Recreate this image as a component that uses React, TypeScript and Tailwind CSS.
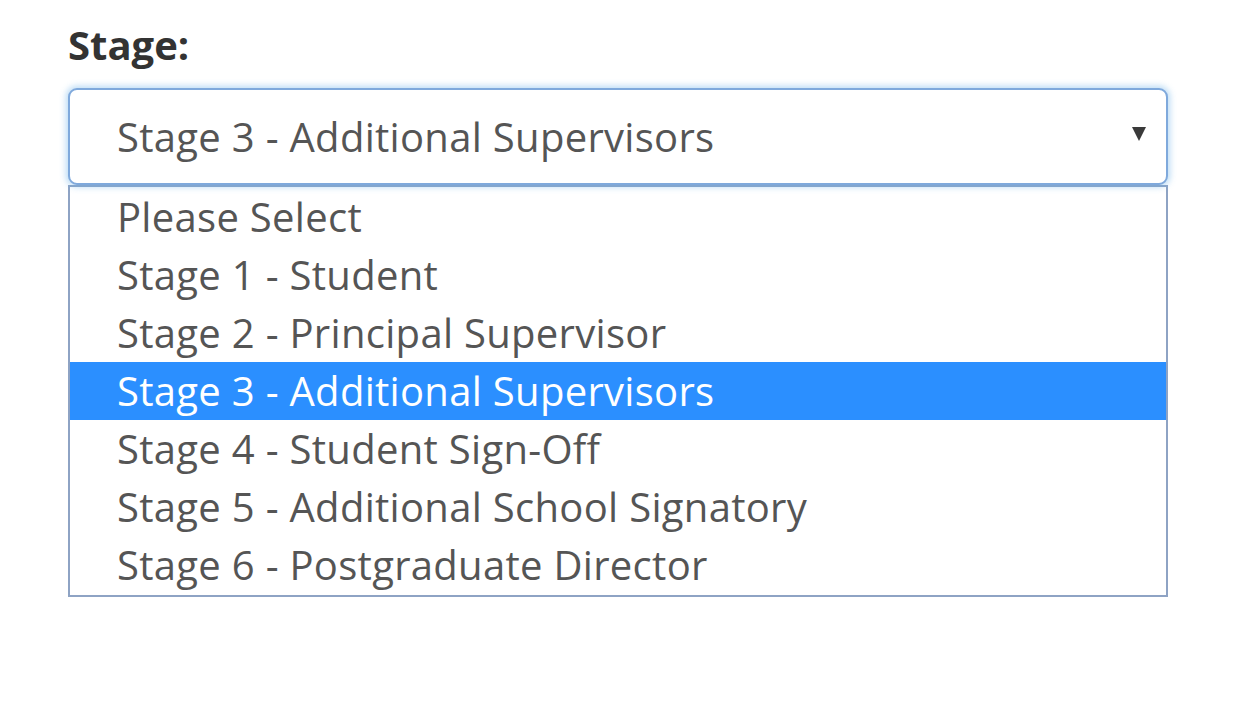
const options = [
  "Please Select",
  "Stage 1 - Student",
  "Stage 2 - Principal Supervisor",
  "Stage 3 - Additional Supervisors",
  "Stage 4 - Student Sign-Off",
  "Stage 5 - Additional School Signatory",
  "Stage 6 - Postgraduate Director",
]

const selected = 3

export default function App() {
  return (
    <div
      className="w-[1250px] h-[710px] bg-white pt-[18px] pl-[68px]"
      style={{ fontFamily: '"Open Sans", "Noto Sans", sans-serif' }}
    >
      <div className="w-[1100px]">
        {/* Label */}
        <div className="text-[40px] leading-[54px] font-bold text-[#333333] mb-[16px]">Stage:</div>

        {/* Select box */}
        <div className="relative h-[97px] rounded-[9px] border-2 border-[#7fa9dc] shadow-[0_0_6px_2px_rgba(102,175,233,0.45)] bg-white flex items-center pl-[47px]">
          <span className="text-[40px] leading-[50px] text-[#555555] tracking-[0.3px]">{options[selected]}</span>
          <svg className="absolute right-[19px] top-[35px]" width="16" height="17" viewBox="0 0 16 17">
            <polygon points="1,2 15,2 8,16" fill="#3a3a3a" />
          </svg>
        </div>

        {/* Options list */}
        <div className="border-2 border-[#8ea3c4] bg-white py-[1px]">
          {options.map((opt, i) => (
            <div
              key={i}
              className={
                i === selected
                  ? "h-[58px] flex items-center pl-[47px] text-[40px] leading-[50px] tracking-[0.3px] bg-[#2b8fff] text-white"
                  : "h-[58px] flex items-center pl-[47px] text-[40px] leading-[50px] tracking-[0.3px] text-[#555555]"
              }
            >
              {opt}
            </div>
          ))}
        </div>
      </div>
    </div>
  )
}
